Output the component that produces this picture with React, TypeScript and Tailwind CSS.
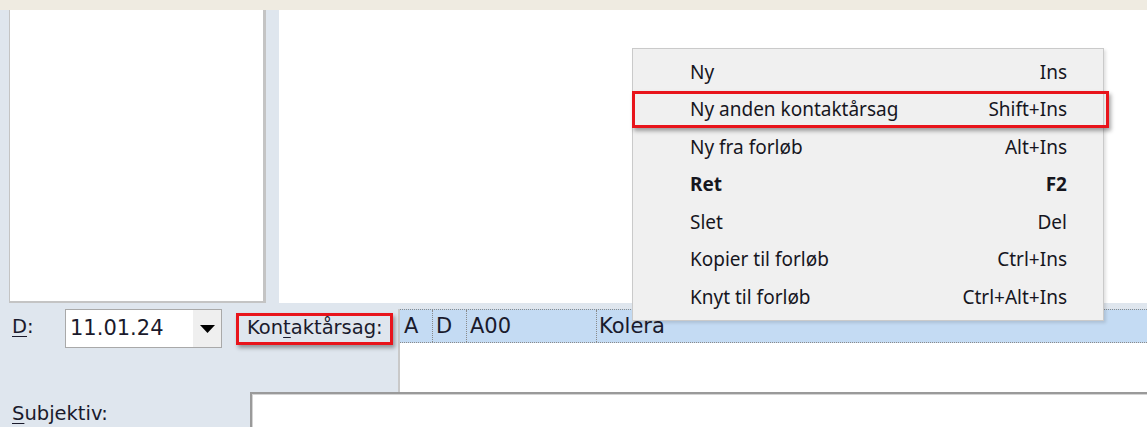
import React from 'react';

type MenuItem = { label: string; shortcut: string; bold?: boolean; marked?: boolean };

const menuItems: MenuItem[] = [
  { label: 'Ny', shortcut: 'Ins' },
  { label: 'Ny anden kontaktårsag', shortcut: 'Shift+Ins', marked: true },
  { label: 'Ny fra forløb', shortcut: 'Alt+Ins' },
  { label: 'Ret', shortcut: 'F2', bold: true },
  { label: 'Slet', shortcut: 'Del' },
  { label: 'Kopier til forløb', shortcut: 'Ctrl+Ins' },
  { label: 'Knyt til forløb', shortcut: 'Ctrl+Alt+Ins' },
];

const ContextMenu: React.FC = () => (
  <div className="absolute left-[632px] top-[48px] w-[472px] bg-[#f0f0f0] border border-[#cacaca] shadow-[2px_2px_3px_rgba(0,0,0,0.12)] pt-[4px] pb-[4px] font-['Noto_Sans',sans-serif] text-[19px] text-[#16161e]">
    {menuItems.map((item) => (
      <div key={item.label} className="relative flex items-center h-[37.5px] pl-[57px] pr-[36px]">
        <span className={item.bold ? 'font-bold' : ''}>{item.label}</span>
        <span className={'ml-auto ' + (item.bold ? 'font-bold' : '')}>{item.shortcut}</span>
        {item.marked && (
          <div className="absolute -left-[1px] -right-[6px] top-0 bottom-0 border-[3px] border-[#e8141b] shadow-[2px_3px_4px_rgba(0,0,0,0.35)]" />
        )}
      </div>
    ))}
  </div>
);

const DateField: React.FC = () => (
  <div className="mt-[6px] h-[39px] w-[157px] flex bg-white border border-[#a9a9a9]">
    <span className="flex-1 pl-[4px] pt-[4px] text-[21px] leading-[28px]">11.01.24</span>
    <div className="w-[28px] bg-[#efefef] flex items-center justify-center">
      <svg width="15" height="8" viewBox="0 0 15 8">
        <path d="M0 0 H15 L7.5 8 Z" fill="#000" />
      </svg>
    </div>
  </div>
);

const ReasonTable: React.FC = () => (
  <div className="ml-[5px] mt-[6px] flex-1 flex flex-col border-l-2 border-[#c9c9c9] bg-white">
    <div className="flex h-[34px] bg-[#c4dbf3] border-y border-dotted border-[#8a8a8a] text-[21px] leading-[32px]">
      <div className="w-[33px] pl-[4px] border-r border-dotted border-[#8a8a8a]">A</div>
      <div className="w-[34px] pl-[3px] border-r border-dotted border-[#8a8a8a]">D</div>
      <div className="w-[130px] pl-[3px] border-r border-dotted border-[#8a8a8a]">A00</div>
      <div className="flex-1 pl-[2px]">Kolera</div>
    </div>
    <div className="flex-1" />
  </div>
);

export default function App() {
  return (
    <div className="relative w-[1147px] h-[427px] overflow-hidden bg-[#dfe6ee] font-['DejaVu_Sans',sans-serif] text-[#1a1a2c]">
      <div className="h-[10px] bg-[#efebe1]" />

      {/* upper panes */}
      <div className="flex h-[293px]">
        <div className="ml-[9px] w-[257px] bg-white border-l border-b-2 border-r-[3px] border-[#c4c4c4]" />
        <div className="ml-[13px] flex-1 bg-white" />
      </div>

      {/* date + contact reason row */}
      <div className="flex h-[89px]">
        <div className="w-[65px] pl-[12px] pt-[12px] text-[19.5px] leading-[24px]">
          <span className="underline underline-offset-[3px]">D</span>:
        </div>
        <DateField />
        <div className="relative ml-[14px] mt-[10px] h-[32px] w-[157px] pl-[11px] text-[19.5px] leading-[30px]">
          Kon<span className="underline underline-offset-[3px]">t</span>aktårsag:
          <div className="absolute inset-0 border-[3px] border-[#e8141b] shadow-[2px_3px_4px_rgba(0,0,0,0.35)]" />
        </div>
        <ReasonTable />
      </div>

      {/* subjective note */}
      <div className="flex h-[35px]">
        <div className="w-[250px] pl-[12px] pt-[10px] text-[19.5px] leading-[24px]">
          <span className="underline underline-offset-[3px]">S</span>ubjektiv:
        </div>
        <div className="flex-1 bg-white border-t-2 border-l-2 border-[#9a9a9a] shadow-[inset_1px_1px_0_#d4d4d4]" />
      </div>

      <ContextMenu />
    </div>
  );
}
